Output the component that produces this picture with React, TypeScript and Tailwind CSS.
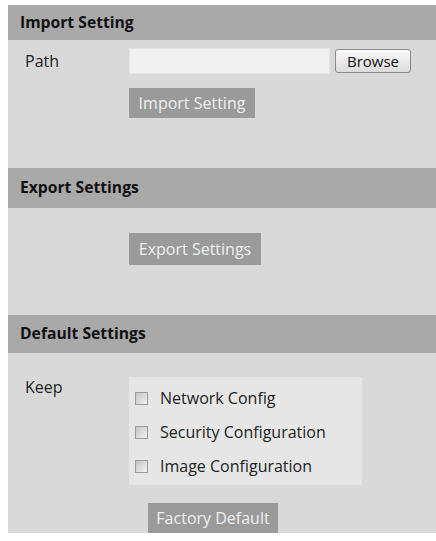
const font = { fontFamily: '"Open Sans", "Noto Sans", sans-serif' };

function Header({ title, h }: { title: string; h: string }) {
  return (
    <div className={`${h} flex items-center bg-[#a9a9a9] pl-[12px] text-[15.7px] font-bold text-[#111]`}>
      {title}
    </div>
  );
}

function GrayButton({ label, w, h }: { label: string; w: string; h: string }) {
  return (
    <div className={`${w} ${h} flex items-center justify-center bg-[#9a9a9a] text-[16px] text-[#f0f0f0]`}>
      {label}
    </div>
  );
}

function Check({ label }: { label: string }) {
  return (
    <div className="flex h-[22px] items-center">
      <span className="h-[13px] w-[13px] border border-[#9a9a9a] bg-gradient-to-br from-[#c4c4c4] to-[#f2f2f2]" />
      <span className="ml-[12px] text-[16px] text-[#222]">{label}</span>
    </div>
  );
}

export default function App() {
  return (
    <div className="min-h-[541px] w-[436px] bg-white pl-[8px] pt-[5px]" style={font}>
      <div className="bg-[#d9d9d9]">
        <Header title="Import Setting" h="h-[35px]" />
        <div className="pb-[50px] pt-[8px]">
          <div className="flex items-center">
            <div className="w-[121px] pl-[17px] text-[16px] text-[#222]">Path</div>
            <div className="h-[26px] w-[201px] border border-[#e4e4e4] bg-[#f1f1f1]" />
            <div className="ml-[5px] flex h-[24px] w-[76px] items-center justify-center rounded-[3px] border border-[#8a8a8a] bg-gradient-to-b from-[#fafafa] to-[#dcdcdc] text-[15px] text-[#111]">
              Browse
            </div>
          </div>
          <div className="ml-[121px] mt-[14px]">
            <GrayButton label="Import Setting" w="w-[126px]" h="h-[30px]" />
          </div>
        </div>

        <Header title="Export Settings" h="h-[40px]" />
        <div className="pb-[50px] pt-[25px]">
          <div className="ml-[121px]">
            <GrayButton label="Export Settings" w="w-[132px]" h="h-[32px]" />
          </div>
        </div>

        <Header title="Default Settings" h="h-[38px]" />
        <div className="pt-[24px]">
          <div className="flex">
            <div className="w-[121px] pl-[17px] text-[16px] leading-[20px] text-[#222]">Keep</div>
            <div className="flex w-[233px] flex-col gap-[12px] bg-[#e6e6e6] pb-[8px] pl-[6px] pt-[10px]">
              <Check label="Network Config" />
              <Check label="Security Configuration" />
              <Check label="Image Configuration" />
            </div>
          </div>
          <div className="ml-[140px] mt-[18px]">
            <GrayButton label="Factory Default" w="w-[130px]" h="h-[30px]" />
          </div>
        </div>
      </div>
    </div>
  );
}
